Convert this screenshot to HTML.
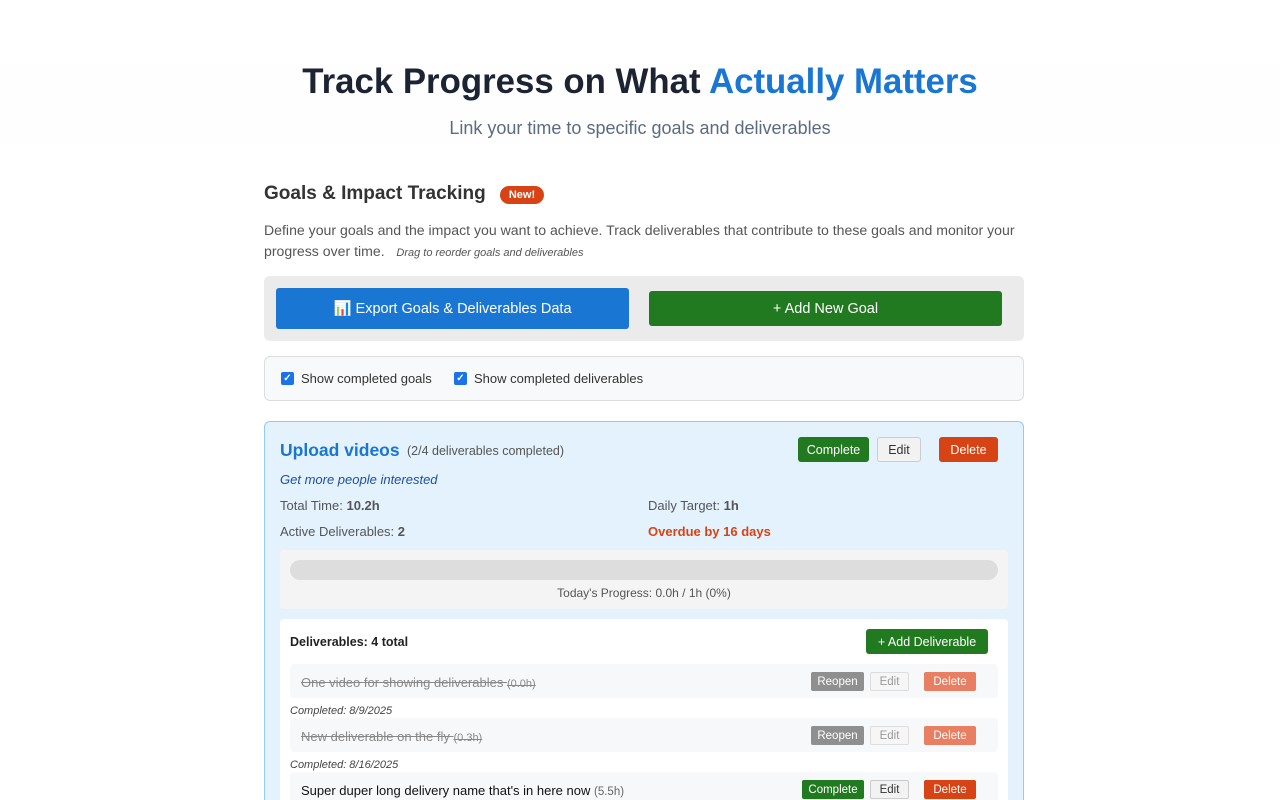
<!DOCTYPE html>
<html style="overflow:hidden;height:800px"><head><meta charset="utf-8"><style>
*{box-sizing:border-box;margin:0;padding:0}
body{width:1280px;height:800px;overflow:hidden;background:#fff;font-family:"Liberation Sans",sans-serif;position:relative}
.a{position:absolute;white-space:nowrap}
.btn{position:absolute;display:flex;align-items:center;justify-content:center;color:#fff;border-radius:3px;font-family:"Liberation Sans",sans-serif}
.sm{font-size:11.5px;border-radius:2px}
.chk{position:absolute;width:13px;height:13px;background:#1a73e8;border-radius:2px;color:#fff;font-size:10px;line-height:13px;text-align:center;font-weight:bold}
.item{position:absolute;left:290px;width:708px;height:34px;background:#f6f8fa;border-radius:4px}
</style></head><body>
<div class="a" style="left:0;top:64px;width:1280px;height:80px;background:#fefefe"></div>
<div class="a" style="left:0;width:1280px;top:62px;text-align:center;font-weight:bold;font-size:34.8px;color:#1c2333">Track Progress on What <span style="color:#1976d2">Actually Matters</span></div>
<div class="a" style="left:0;width:1280px;top:118px;text-align:center;font-size:18px;color:#5c6b82">Link your time to specific goals and deliverables</div>

<div class="a" style="left:264px;top:183px;font-size:19px;font-weight:bold;color:#333">Goals &amp; Impact Tracking</div>
<div class="a" style="left:500px;top:186px;width:44px;height:18px;background:#d84315;border-radius:9px;color:#fff;font-size:11px;font-weight:bold;text-align:center;line-height:18px">New!</div>
<div class="a" style="left:264px;top:220px;font-size:14.1px;color:#555;line-height:21px;white-space:normal;width:770px">Define your goals and the impact you want to achieve. Track deliverables that contribute to these goals and monitor your progress over time. &nbsp;&nbsp;<i style="font-size:11px">Drag to reorder goals and deliverables</i></div>

<div class="a" style="left:264px;top:276px;width:760px;height:65px;background:#ebebeb;border-radius:6px"></div>
<div class="btn" style="left:276px;top:288px;width:353px;height:41px;background:#1976d2;font-size:14.5px">📊 Export Goals &amp; Deliverables Data</div>
<div class="btn" style="left:649px;top:291px;width:353px;height:35px;background:#217a1f;font-size:14.5px">+ Add New Goal</div>

<div class="a" style="left:264px;top:356px;width:760px;height:45px;background:#f8f9fa;border:1px solid #ddd;border-radius:6px"></div>
<div class="chk" style="left:281px;top:372px">✓</div>
<div class="a" style="left:301px;top:371px;color:#333;font-size:13px">Show completed goals</div>
<div class="chk" style="left:454px;top:372px">✓</div>
<div class="a" style="left:474px;top:371px;font-size:13px;color:#333">Show completed deliverables</div>

<div class="a" style="left:264px;top:421px;width:760px;height:400px;background:#e3f2fd;border:1px solid #90caf9;border-radius:6px"></div>
<div class="a" style="left:280px;top:440px;font-size:17.5px;font-weight:bold;color:#1976d2">Upload videos</div>
<div class="a" style="left:407px;top:444px;font-size:12.5px;color:#555">(2/4 deliverables completed)</div>
<div class="btn" style="left:798px;top:437px;width:71px;height:25px;background:#217a1f;font-size:12.5px">Complete</div>
<div class="btn" style="left:877px;top:437px;width:44px;height:25px;background:#f2f2f2;border:1px solid #ccc;color:#333;font-size:12.5px">Edit</div>
<div class="btn" style="left:939px;top:437px;width:59px;height:25px;background:#d84315;font-size:12.5px">Delete</div>
<div class="a" style="left:280px;top:472px;font-size:13px;font-style:italic;color:#1e50a0">Get more people interested</div>
<div class="a" style="left:280px;top:498px;font-size:13px;color:#555">Total Time: <b>10.2h</b></div>
<div class="a" style="left:648px;top:498px;font-size:13px;color:#555">Daily Target: <b>1h</b></div>
<div class="a" style="left:280px;top:524px;font-size:13px;color:#555">Active Deliverables: <b>2</b></div>
<div class="a" style="left:648px;top:524px;font-size:13px;color:#d84315;font-weight:bold">Overdue by 16 days</div>

<div class="a" style="left:280px;top:550px;width:728px;height:59px;background:#f4f4f4;border-radius:4px"></div>
<div class="a" style="left:290px;top:560px;width:708px;height:20px;background:#ddd;border-radius:10px"></div>
<div class="a" style="left:280px;width:728px;top:586px;text-align:center;font-size:12px;color:#555">Today's Progress: 0.0h / 1h (0%)</div>

<div class="a" style="left:280px;top:619px;width:728px;height:200px;background:#fff;border-radius:4px"></div>
<div class="a" style="left:290px;top:635px;font-size:12.5px;font-weight:bold;color:#222">Deliverables: 4 total</div>
<div class="btn" style="left:866px;top:629px;width:122px;height:25px;background:#217a1f;font-size:12.5px">+ Add Deliverable</div>

<div class="item" style="top:664px"></div>
<div class="a" style="left:301px;top:675px;font-size:13px;color:#888;text-decoration:line-through">One video for showing deliverables <span style="font-size:11px">(0.0h)</span></div>
<div class="btn sm" style="left:811px;top:672px;width:53px;height:19px;background:#8f8f8f">Reopen</div>
<div class="btn sm" style="left:870px;top:672px;width:39px;height:19px;background:#f6f6f6;border:1px solid #ddd;color:#999">Edit</div>
<div class="btn sm" style="left:924px;top:672px;width:52px;height:19px;background:#e87e62">Delete</div>
<div class="a" style="left:290px;top:705px;font-size:11px;font-style:italic;color:#444">Completed: 8/9/2025</div>

<div class="item" style="top:718px"></div>
<div class="a" style="left:301px;top:729px;font-size:13px;color:#888;text-decoration:line-through">New deliverable on the fly <span style="font-size:11px">(0.3h)</span></div>
<div class="btn sm" style="left:811px;top:726px;width:53px;height:19px;background:#8f8f8f">Reopen</div>
<div class="btn sm" style="left:870px;top:726px;width:39px;height:19px;background:#f6f6f6;border:1px solid #ddd;color:#999">Edit</div>
<div class="btn sm" style="left:924px;top:726px;width:52px;height:19px;background:#e87e62">Delete</div>
<div class="a" style="left:290px;top:759px;font-size:11px;font-style:italic;color:#444">Completed: 8/16/2025</div>

<div class="item" style="top:772px;height:40px"></div>
<div class="a" style="left:301px;top:783px;font-size:13px;color:#111">Super duper long delivery name that's in here now <span style="font-size:11.5px;color:#666">(5.5h)</span></div>
<div class="btn sm" style="left:802px;top:780px;width:62px;height:19px;background:#217a1f">Complete</div>
<div class="btn sm" style="left:870px;top:780px;width:39px;height:19px;background:#f2f2f2;border:1px solid #ccc;color:#333">Edit</div>
<div class="btn sm" style="left:924px;top:780px;width:52px;height:19px;background:#d84315">Delete</div>
</body></html>
